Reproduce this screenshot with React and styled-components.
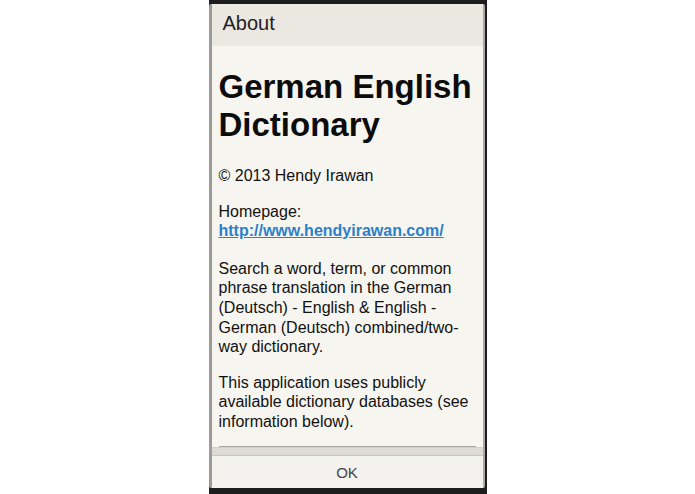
import styled, { createGlobalStyle } from 'styled-components';

const GlobalStyle = createGlobalStyle`
  html, body {
    margin: 0;
    padding: 0;
    background: #ffffff;
  }
  body {
    font-family: 'Liberation Sans', Arial, sans-serif;
  }
`;

const Page = styled.div`
  display: flex;
  justify-content: center;
  height: 494px;
  overflow: hidden;
`;

const Frame = styled.div`
  width: 278px;
  height: 494px;
  box-sizing: border-box;
  padding: 4px 2px 6px 0;
  background: #1d1d1d;
  display: flex;
`;

const Dialog = styled.div`
  flex: 1;
  display: flex;
  flex-flow: column;
  border-left: 3px solid #9c9b98;
  border-right: 2px solid #a9a8a5;
  border-radius: 2px;
  overflow: hidden;
  background: #f7f5f0;
`;

const Header = styled.div`
  height: 42px;
  flex: none;
  box-sizing: border-box;
  display: flex;
  align-items: center;
  padding: 0 0 4px 11px;
  background: #ebe8e1;
  color: #222;
  font-size: 20px;
`;

const Body = styled.div`
  flex: 1;
  min-height: 0;
  overflow: hidden;
  padding: 0 7px;
  color: #111;
  font-size: 16px;
  line-height: 19.6px;
`;

const Title = styled.h1`
  margin: 22px 0 22px;
  font-size: 33px;
  line-height: 38px;
  font-weight: bold;
  color: #0c0c0c;
`;

const Para = styled.p`
  margin: 0 0 ${p => p.$gap ?? 16}px;
`;

const Link = styled.a`
  color: #2c80c9;
  font-weight: bold;
  text-decoration: underline;
`;

const Rule = styled.hr`
  margin: 0;
  border: none;
  border-top: 1px solid #a9a7a2;
`;

const ButtonBar = styled.div`
  flex: none;
  padding: 7px 0 0;
  background: #dedbd4;
  border-top: 1px solid #d2cfc8;
`;

const Button = styled.div`
  height: 32px;
  display: flex;
  align-items: center;
  justify-content: center;
  background: #f4f2ee;
  border-top: 1px solid #c9c6c0;
  color: #444;
  font-size: 15px;
`;

export default function App() {
  return (
    <>
      <GlobalStyle />
      <Page>
        <Frame>
          <Dialog>
            <Header>About</Header>
            <Body>
              <Title>German English Dictionary</Title>
              <Para>© 2013 Hendy Irawan</Para>
              <Para $gap={18}>
                Homepage:<br />
                <Link href="#">http://www.hendyirawan.com/</Link>
              </Para>
              <Para>
                Search a word, term, or common phrase translation in the German
                (Deutsch) - English &amp; English - German (Deutsch) combined/two-way
                dictionary.
              </Para>
              <Para $gap={14}>
                This application uses publicly available dictionary databases (see
                information below).
              </Para>
              <Rule />
            </Body>
            <ButtonBar>
              <Button>OK</Button>
            </ButtonBar>
          </Dialog>
        </Frame>
      </Page>
    </>
  );
}
